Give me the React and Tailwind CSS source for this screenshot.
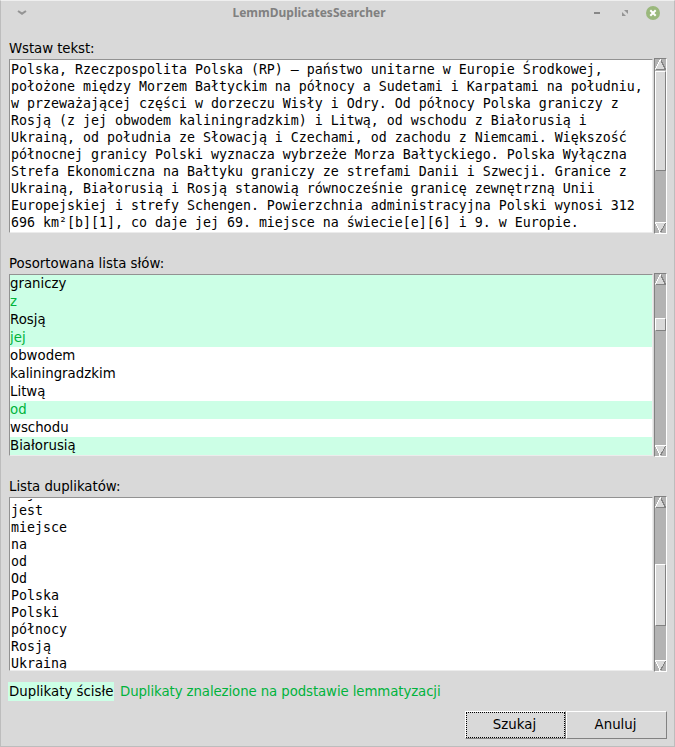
const TEXT = [
  'Polska, Rzeczpospolita Polska (RP) – państwo unitarne w Europie Środkowej,',
  'położone między Morzem Bałtyckim na północy a Sudetami i Karpatami na południu,',
  'w przeważającej części w dorzeczu Wisły i Odry. Od północy Polska graniczy z',
  'Rosją (z jej obwodem kaliningradzkim) i Litwą, od wschodu z Białorusią i',
  'Ukrainą, od południa ze Słowacją i Czechami, od zachodu z Niemcami. Większość',
  'północnej granicy Polski wyznacza wybrzeże Morza Bałtyckiego. Polska Wyłączna',
  'Strefa Ekonomiczna na Bałtyku graniczy ze strefami Danii i Szwecji. Granice z',
  'Ukrainą, Białorusią i Rosją stanowią równocześnie granicę zewnętrzną Unii',
  'Europejskiej i strefy Schengen. Powierzchnia administracyjna Polski wynosi 312',
  '696 km²[b][1], co daje jej 69. miejsce na świecie[e][6] i 9. w Europie.',
];

const WORDS = [
  { word: 'graniczy', exact: true },
  { word: 'z', exact: true, lemma: true },
  { word: 'Rosją', exact: true },
  { word: 'jej', exact: true, lemma: true },
  { word: 'obwodem' },
  { word: 'kaliningradzkim' },
  { word: 'Litwą' },
  { word: 'od', exact: true, lemma: true },
  { word: 'wschodu' },
  { word: 'Białorusią', exact: true },
];

const DUPLICATES = ['daje', 'jest', 'miejsce', 'na', 'od', 'Od', 'Polska', 'Polski', 'północy', 'Rosją', 'Ukrainą'];

function Arrow({ down }) {
  return (
    <svg className="block h-[11px] w-[11px] shrink-0" viewBox="0 0 11 11" shapeRendering="crispEdges">
      {down ? (
        <>
          <path d="M0 0H11L5.5 11Z" fill="#d9d9d9" />
          <path d="M10.5 1L5.5 10.5" stroke="#828282" fill="none" />
          <path d="M11 0.5H0.5L5 10.5" stroke="#fff" fill="none" />
        </>
      ) : (
        <>
          <path d="M5.5 0L11 11H0Z" fill="#d9d9d9" />
          <path d="M0.5 10.5H10.5L6 1.5" stroke="#828282" fill="none" />
          <path d="M0.5 10L5.5 0.5" stroke="#fff" fill="none" />
        </>
      )}
    </svg>
  );
}

function Scrollbar({ offset, size }) {
  return (
    <div className="flex w-[13px] shrink-0 flex-col border border-t-[#828282] border-l-[#828282] border-r-white border-b-white bg-[#b3b3b3]">
      <Arrow />
      <div className="min-h-0 flex-1">
        <div
          className="w-[11px] border border-t-white border-l-white border-r-[#828282] border-b-[#828282] bg-[#d9d9d9]"
          style={{ marginTop: offset, height: size }}
        />
      </div>
      <Arrow down />
    </div>
  );
}

function Panel({ height, offset, size, children }) {
  return (
    <div className="mx-2 flex" style={{ height }}>
      <div className="my-px mr-px w-[644px] shrink-0 overflow-hidden border border-t-[#929292] border-l-[#929292] border-r-[#ececec] border-b-[#ececec] bg-white">
        {children}
      </div>
      <Scrollbar offset={offset} size={size} />
    </div>
  );
}

const MONO = "whitespace-pre font-['DejaVu_Sans_Mono',monospace] text-[13.29px] leading-[17px]";

export default function App() {
  return (
    <div className="flex h-[747px] w-[675px] flex-col overflow-hidden border border-x-[#bdbdbd] border-t-[#efefef] border-b-[#bdbdbd] bg-[#d9d9d9] font-['DejaVu_Sans',sans-serif] text-[13.333px] leading-[18px] text-black">
      <header className="flex h-[23px] shrink-0 items-center px-[14px] text-[#808080]">
        <svg className="h-[6px] w-[14px]" viewBox="0 0 14 6">
          <path d="M3 1L7 3.7L11 1" stroke="#949494" strokeWidth="2" fill="none" />
        </svg>
        <h1 className="flex-1 pr-[3px] text-center font-['Noto_Sans',sans-serif] text-[12px] leading-[23px] font-bold">
          LemmDuplicatesSearcher
        </h1>
        <div className="flex items-center">
          <svg className="h-[14px] w-[68px]" viewBox="592 5 68 14">
            <path d="M594 12H600" stroke="#878787" strokeWidth="2" />
            <path d="M624 9H628V13ZM622 11V15H626Z" fill="#949494" />
            <circle cx="653" cy="12" r="7" fill="#9ab87c" />
            <path d="M650.3 9.3L655.7 14.7M655.7 9.3L650.3 14.7" stroke="#fff" strokeWidth="2" />
          </svg>
        </div>
      </header>

      <label className="mt-[16px] ml-2 h-[18px] shrink-0 tracking-[-0.08px]">Wstaw tekst:</label>
      <Panel height={176} offset={1} size={100}>
        <div className={`pt-px pl-px ${MONO}`}>
          {TEXT.map((line) => (
            <div key={line}>{line}</div>
          ))}
        </div>
      </Panel>

      <label className="mt-[21px] ml-2 h-[18px] shrink-0">Posortowana lista słów:</label>
      <Panel height={184} offset={33} size={13}>
        {WORDS.map(({ word, exact, lemma }) => (
          <div
            key={word}
            className={`h-[18px] ${exact ? 'bg-[#ccffe6]' : ''} ${lemma ? 'text-[#00b33c]' : ''}`}
          >
            {word}
          </div>
        ))}
      </Panel>

      <label className="mt-[21px] ml-2 h-[18px] shrink-0 tracking-[-0.05px]">Lista duplikatów:</label>
      <Panel height={176} offset={56} size={62}>
        <div className="mt-px ml-px h-[170px] overflow-hidden">
          <div className={`-mt-[14px] ${MONO}`}>
            {DUPLICATES.map((word) => (
              <div key={word}>{word}</div>
            ))}
          </div>
        </div>
      </Panel>

      <div className="mt-[10px] ml-[7px] flex h-[19px] shrink-0 gap-[5px] leading-[20px]">
        <span className="h-[19px] w-[106px] bg-[#ccffe6] pl-px">Duplikaty ścisłe</span>
        <span className="pl-px tracking-[-0.1px] text-[#00b33c]">Duplikaty znalezione na podstawie lemmatyzacji</span>
      </div>

      <div className="mt-[10px] mr-[7px] flex shrink-0 justify-end">
        <button className="h-[28px] w-[101px] border border-t-white border-l-white border-r-[#828282] border-b-[#828282]">
          <span className="flex h-full w-full items-center justify-center border border-dotted border-black pr-[2px]">
            Szukaj
          </span>
        </button>
        <button className="h-[28px] w-[101px] border border-t-white border-l-white border-r-[#828282] border-b-[#828282] pr-[2px]">
          Anuluj
        </button>
      </div>
    </div>
  );
}
